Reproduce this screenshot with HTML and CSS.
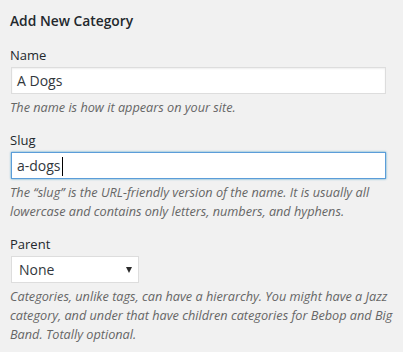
FILE: index.html
```html
<!DOCTYPE html>
<html lang="en">
<head>
  <meta charset="UTF-8">
  <title>Add New Category</title>
  <link rel="stylesheet" href="styles.css">
</head>
<body>

<div class="form-wrap">
  <h2>Add New Category</h2>

  <!-- Name -->
  <div class="form-field">
    <label>Name</label>
    <div class="text-input">A Dogs</div>
    <p class="description">The name is how it appears on your site.</p>
  </div>

  <!-- Slug -->
  <div class="form-field">
    <label>Slug</label>
    <div class="text-input focused">a-dogs<span class="caret"></span></div>
    <p class="description">The &ldquo;slug&rdquo; is the URL-friendly version of the name. It is usually all lowercase and contains only letters, numbers, and hyphens.</p>
  </div>

  <!-- Parent -->
  <div class="form-field">
    <label>Parent</label>
    <div class="select-input">
      <span>None</span>
      <svg width="6" height="6" viewBox="0 0 6 6"><path d="M0 0h6L3 6z" fill="#2b2b2b"/></svg>
    </div>
    <p class="description">Categories, unlike tags, can have a hierarchy. You might have a Jazz category, and under that have children categories for Bebop and Big Band. Totally optional.</p>
  </div>
</div>

</body>
</html>
```

FILE: styles.css
```css
html, body {
  margin: 0;
  padding: 0;
  background-color: #f1f1f1;
  color: #23282d;
  font-family: 'Open Sans', sans-serif;
}

.form-wrap {
  padding: 11px 5px 0 10px;
}

h2 {
  margin: 0 0 15px;
  font-size: 13.8px;
  font-weight: 600;
  line-height: 20px;
}

.form-field {
  margin-bottom: 14px;
}

label {
  display: block;
  font-size: 13px;
  line-height: 19px;
  margin-bottom: 2px;
}

.text-input {
  box-sizing: border-box;
  height: 27px;
  margin: 0 12px 0 1px;
  padding: 0 5px;
  background: #fff;
  border: 1px solid #ddd;
  box-shadow: inset 0 1px 2px rgba(0, 0, 0, 0.07);
  font-size: 14px;
  line-height: 25px;
  color: #32373c;
}

.text-input.focused {
  border-color: #5b9dd9;
  box-shadow: 0 0 2px rgba(30, 140, 190, 0.8);
}

.caret {
  display: inline-block;
  width: 1px;
  height: 19px;
  margin-left: 1px;
  background: #000;
  vertical-align: -5px;
}

.select-input {
  box-sizing: border-box;
  width: 128px;
  height: 27px;
  margin-left: 1px;
  padding: 0 6px;
  display: flex;
  align-items: center;
  justify-content: space-between;
  background: #fff;
  border: 1px solid #ddd;
  font-size: 14px;
  color: #32373c;
}

.select-input span {
  padding-left: 1px;
}

.description {
  margin: 4px 0 0;
  font-size: 12.7px;
  font-style: italic;
  line-height: 19px;
  color: #666;
}
```
